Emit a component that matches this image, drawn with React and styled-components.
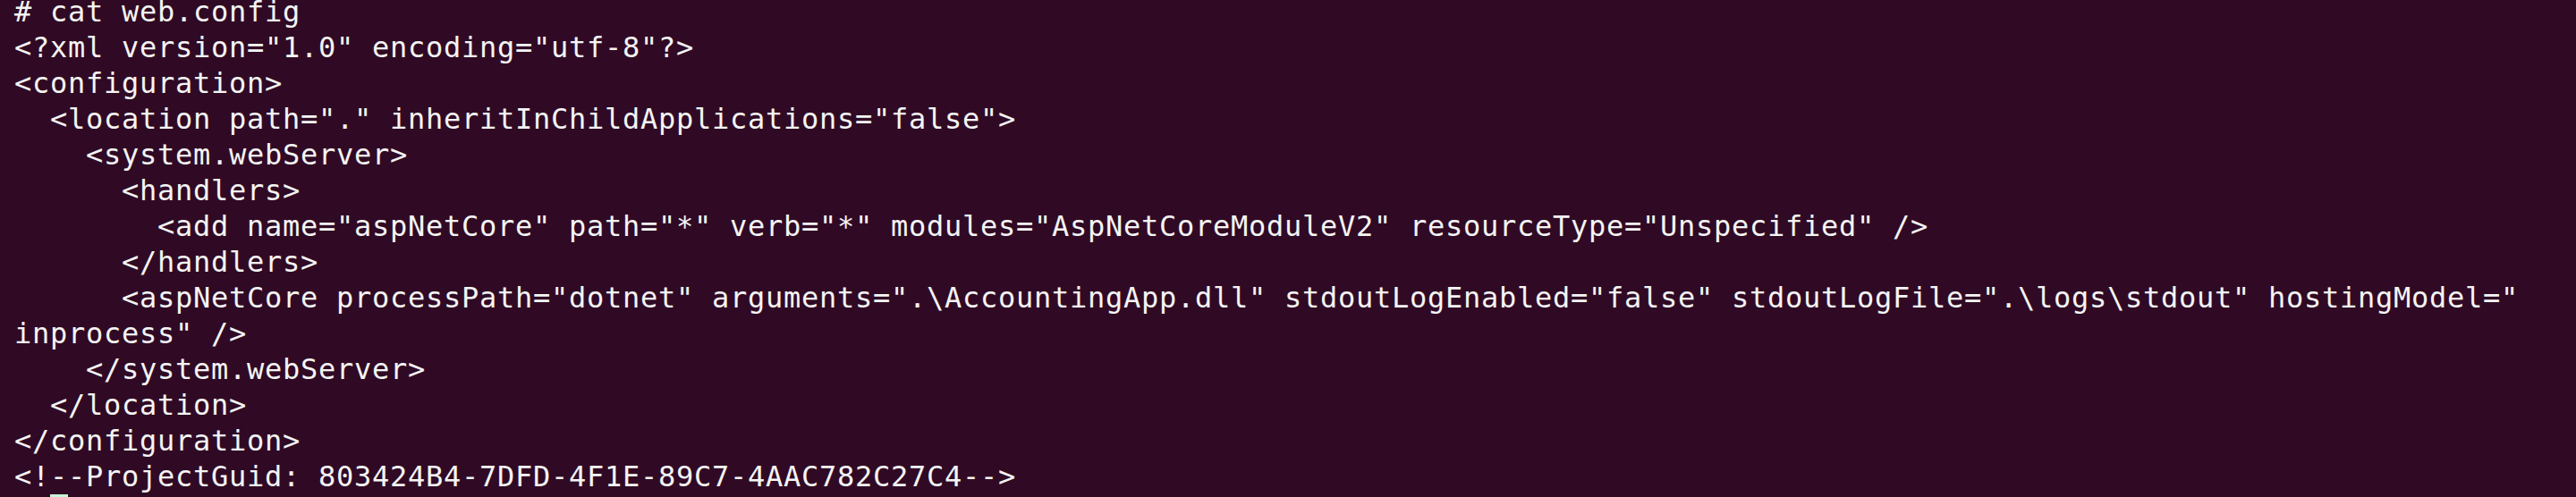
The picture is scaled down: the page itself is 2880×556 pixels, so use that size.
import React from "react";
import styled, { createGlobalStyle } from "styled-components";

const GlobalStyle = createGlobalStyle`
  html, body {
    margin: 0;
    padding: 0;
    background: #300a24;
    overflow: hidden;
  }
`;

const Terminal = styled.div`
  height: 556px;
  background: #300a24;
  overflow: hidden;
  padding-left: 16px;
  box-sizing: border-box;
`;

const Screen = styled.pre`
  margin: -7px 0 0 0;
  font-family: "DejaVu Sans Mono", "Liberation Mono", monospace;
  font-size: 32px;
  letter-spacing: 0.734px;
  line-height: 40px;
  color: #f4f4f4;
`;

const Row = styled.div`
  height: 40px;
  white-space: pre;
`;

const Cursor = styled.span`
  display: inline-block;
  width: 20px;
  height: 40px;
  vertical-align: top;
  background: #c6f5d8;
`;

const lines = [
  "# cat web.config",
  '<?xml version="1.0" encoding="utf-8"?>',
  "<configuration>",
  '  <location path="." inheritInChildApplications="false">',
  "    <system.webServer>",
  "      <handlers>",
  '        <add name="aspNetCore" path="*" verb="*" modules="AspNetCoreModuleV2" resourceType="Unspecified" />',
  "      </handlers>",
  '      <aspNetCore processPath="dotnet" arguments=".\\AccountingApp.dll" stdoutLogEnabled="false" stdoutLogFile=".\\logs\\stdout" hostingModel="',
  'inprocess" />',
  "    </system.webServer>",
  "  </location>",
  "</configuration>",
  "<!--ProjectGuid: 803424B4-7DFD-4F1E-89C7-4AAC782C27C4-->",
];

export default function App() {
  return (
    <>
      <GlobalStyle />
      <Terminal>
        <Screen>
          {lines.map((text, i) => (
            <Row key={i}>{text}</Row>
          ))}
          <Row>
            {"# "}
            <Cursor />
          </Row>
        </Screen>
      </Terminal>
    </>
  );
}
